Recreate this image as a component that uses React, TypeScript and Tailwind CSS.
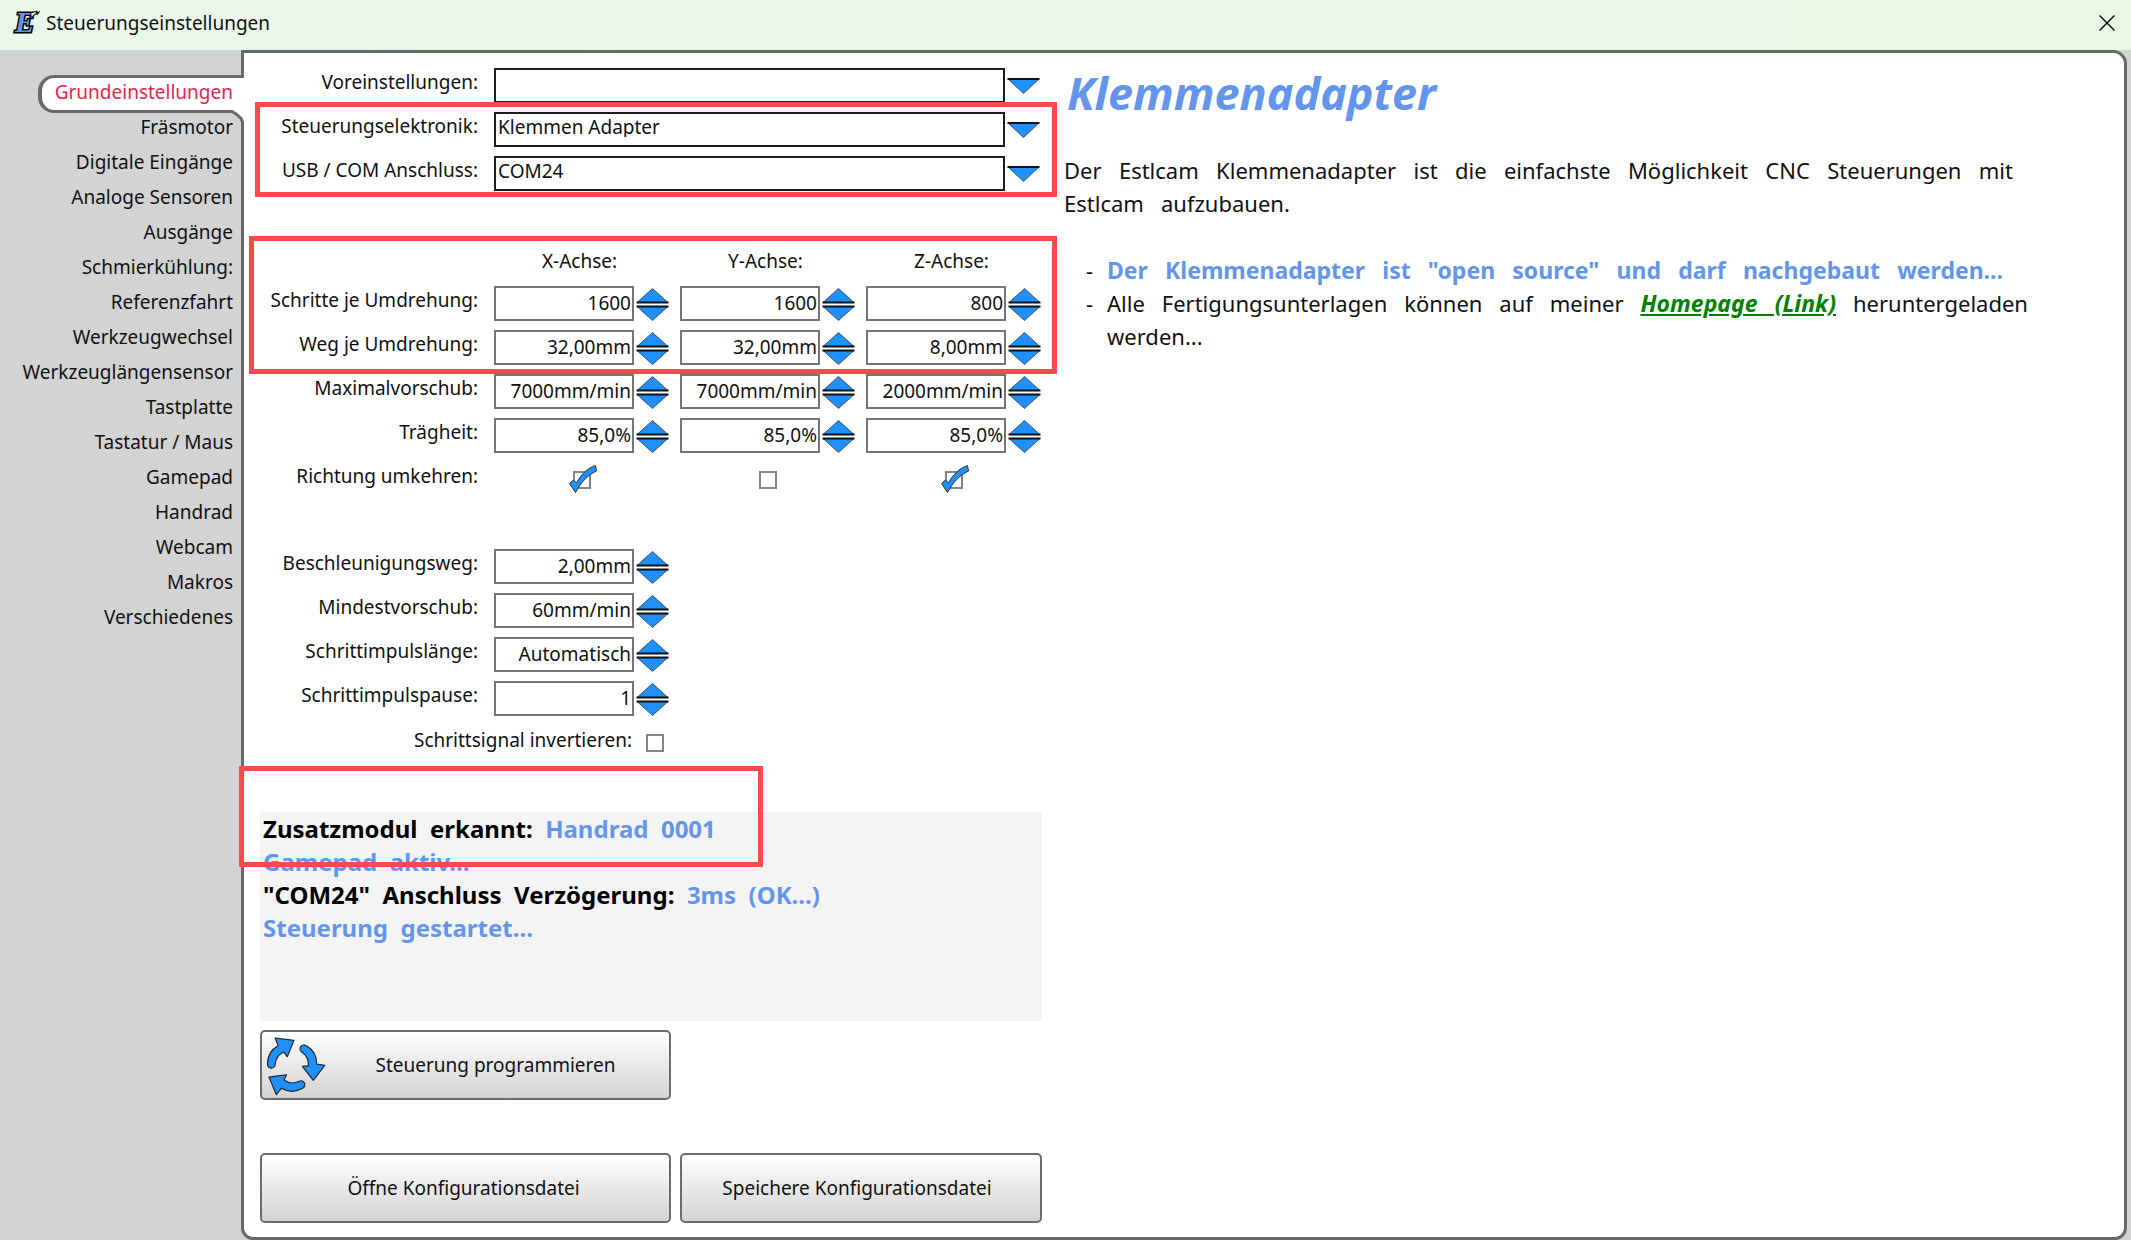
import { useId, useState } from "react";

const NAV = [
  "Grundeinstellungen",
  "Fräsmotor",
  "Digitale Eingänge",
  "Analoge Sensoren",
  "Ausgänge",
  "Schmierkühlung:",
  "Referenzfahrt",
  "Werkzeugwechsel",
  "Werkzeuglängensensor",
  "Tastplatte",
  "Tastatur / Maus",
  "Gamepad",
  "Handrad",
  "Webcam",
  "Makros",
  "Verschiedenes",
];

const AXES = ["X-Achse:", "Y-Achse:", "Z-Achse:"];

const AXIS_ROWS: { label: string; values: string[] }[] = [
  { label: "Schritte je Umdrehung:", values: ["1600", "1600", "800"] },
  { label: "Weg je Umdrehung:", values: ["32,00mm", "32,00mm", "8,00mm"] },
  { label: "Maximalvorschub:", values: ["7000mm/min", "7000mm/min", "2000mm/min"] },
  { label: "Trägheit:", values: ["85,0%", "85,0%", "85,0%"] },
];

const SINGLE_ROWS = [
  { label: "Beschleunigungsweg:", value: "2,00mm" },
  { label: "Mindestvorschub:", value: "60mm/min" },
  { label: "Schrittimpulslänge:", value: "Automatisch" },
  { label: "Schrittimpulspause:", value: "1" },
];

const ROW = "grid grid-cols-[218px_minmax(0,1fr)] gap-x-4 h-[35px]";
const LABEL = "text-right leading-7 whitespace-nowrap";
const AXIS_GRID = "grid grid-cols-[175px_175px_175px] gap-x-[11px]";

function AppIcon() {
  return (
    <svg width="30" height="28" viewBox="0 0 30 28" className="overflow-visible" aria-hidden="true">
      <text
        x="3"
        y="25"
        fontFamily="'Liberation Serif', serif"
        fontSize="29"
        fontWeight="bold"
        fontStyle="italic"
        fill="#6495ed"
        stroke="#000"
        strokeWidth="3"
        paintOrder="stroke"
      >
        E
      </text>
      <path d="M19 6l4-1.500 2-.5-1 3-2 1-1.500 1.500-2-1z" fill="#dcdcdc" stroke="#111" strokeWidth="1" />
      <path d="M23.500 5.500L28.500 4L25 8.500Z" fill="#111" />
    </svg>
  );
}

function RecycleIcon() {
  const arrow =
    "M1.500 28C1.500 19 6 12.500 12.500 9L9.500 1L29 3.500L22 20.500L18.500 15.500C13 18 10 22 9.500 28.500A4 4 0 0 1 1.500 28Z";
  return (
    <svg width="56" height="56" viewBox="0 0 58 58" className="overflow-visible" aria-hidden="true">
      <g fill="#1e90ff" stroke="#222" strokeWidth="1.200" strokeLinejoin="round">
        <path d={arrow} />
        <path d={arrow} transform="rotate(120 27 30)" />
        <path d={arrow} transform="rotate(240 27 30)" />
      </g>
    </svg>
  );
}

function SelectRow({ label, value }: { label: string; value: string }) {
  const id = useId();
  return (
    <div className={ROW}>
      <label htmlFor={id} className={LABEL}>
        {label}
      </label>
      <div className="flex gap-[2px]">
        <select
          id={id}
          defaultValue={value}
          className="h-[35px] w-[511px] appearance-none rounded-none border-2 border-[#1c1c1c] bg-white pb-1 pl-[2px] leading-none outline-none"
        >
          <option>{value}</option>
        </select>
        <svg width="33" height="35" viewBox="0 0 33 35" aria-hidden="true">
          <path d="M1 11H32L16.500 25.500Z" fill="#1e90ff" stroke="#333" strokeWidth=".8" />
          <path d="M.5 11H32.500" stroke="#111" strokeWidth="2" />
        </svg>
      </div>
    </div>
  );
}

function Spin({ id, value, label }: { id?: string; value: string; label?: string }) {
  return (
    <div className="flex gap-[2px]">
      <input
        id={id}
        aria-label={label}
        defaultValue={value}
        className="h-[35px] w-[140px] border-2 border-[#757575] bg-white pr-px pb-[2px] text-right outline-none"
      />
      <div className="flex flex-col pt-[2px]">
        <button type="button" aria-label="Erhöhen" className="h-[16px]">
          <svg width="33" height="16" viewBox="0 0 33 16">
            <path d="M1 14.500L16.500 .5L32 14.500Z" fill="#1e90ff" stroke="#333" strokeWidth=".8" />
            <path d="M.5 14.500H32.500" stroke="#111" strokeWidth="2" />
          </svg>
        </button>
        <button type="button" aria-label="Verringern" className="h-[17px]">
          <svg width="33" height="17" viewBox="0 0 33 17">
            <path d="M1 2.500H32L16.500 16.500Z" fill="#1e90ff" stroke="#333" strokeWidth=".8" />
            <path d="M.5 2.500H32.500" stroke="#111" strokeWidth="2" />
          </svg>
        </button>
      </div>
    </div>
  );
}

function Check({ id, label, checked }: { id?: string; label?: string; checked?: boolean }) {
  return (
    <span className="relative block size-[18px]">
      <input
        id={id}
        aria-label={label}
        type="checkbox"
        defaultChecked={checked}
        className="peer block size-[18px] appearance-none border-2 border-[#858585] bg-white"
      />
      <svg
        width="30"
        height="30"
        viewBox="0 0 30 30"
        className="pointer-events-none absolute -top-[7px] -left-[5px] hidden peer-checked:block"
        aria-hidden="true"
      >
        <path
          d="M1.500 19.500L5.500 16L8.500 19C13 10.500 19 4.500 27.500 1.500L28.500 7C20 11 13 18 7.500 28.500Z"
          fill="#1e90ff"
          stroke="#333"
          strokeWidth="1"
        />
      </svg>
    </span>
  );
}

function SingleRow({ label, value }: { label: string; value: string }) {
  const id = useId();
  return (
    <div className={ROW}>
      <label htmlFor={id} className={LABEL}>
        {label}
      </label>
      <Spin id={id} value={value} />
    </div>
  );
}

const BUTTON =
  "flex h-[70px] items-center rounded-[5px] border-2 border-[#6c6c6c] bg-linear-to-b from-white to-[#d3d3d3]";

export default function App() {
  const [active, setActive] = useState(0);
  return (
    <div className="flex min-h-screen flex-col bg-[#d3d3d3] font-['Noto_Sans','Open_Sans',sans-serif] text-[19px] text-[#111]">
      <header className="flex h-[50px] items-center bg-linear-to-r from-[#eaf8eb] to-[#ebf7e5] pr-4 pl-[12px]">
        <div className="pb-2">
          <AppIcon />
        </div>
        <h1 className="ml-1 pb-1">Steuerungseinstellungen</h1>
        <button type="button" aria-label="Schließen" className="ml-auto pb-1">
          <svg width="16" height="16" viewBox="0 0 16 16">
            <path d="M.5 .5L15.500 15.500M15.500 .5L.5 15.500" stroke="#111" strokeWidth="1.500" />
          </svg>
        </button>
      </header>

      <div className="flex flex-1">
        <nav className="flex w-[241px] shrink-0 flex-col pt-[25px]">
          {NAV.map((item, i) =>
            i === active ? (
              <button
                key={item}
                type="button"
                aria-current="page"
                className="relative z-10 -mr-[3px] -mb-[3px] ml-[38px] h-[38px] rounded-l-2xl border-y-[3px] border-l-[4px] border-[#696969] bg-white pr-[11px] pb-1 text-right leading-7 text-[#e8234f]"
              >
                {item}
                <svg
                  width="16"
                  height="18"
                  viewBox="0 0 16 18"
                  className="absolute right-0 -bottom-[18px]"
                  aria-hidden="true"
                >
                  <path d="M3 0H16V18H14.500V12L13 8.500L8 4Z" fill="#fff" />
                  <path d="M0 1.500H4L8 4L13 8.500L14.500 12V18" fill="none" stroke="#696969" strokeWidth="3" />
                </svg>
              </button>
            ) : (
              <button
                key={item}
                type="button"
                onClick={() => setActive(i)}
                className="h-[35px] pr-2 text-right whitespace-nowrap"
              >
                {item}
              </button>
            ),
          )}
        </nav>

        <main className="relative mr-1 flex flex-1 rounded-tr-[14px] rounded-b-[12px] border-[3px] border-[#696969] bg-white pb-[14px] pl-4">
          <form className="w-[782px] shrink-0 pt-[15px]">
            <div className="space-y-[9px]">
              <SelectRow label="Voreinstellungen:" value="" />
              <SelectRow label="Steuerungselektronik:" value="Klemmen Adapter" />
              <SelectRow label="USB / COM Anschluss:" value="COM24" />
            </div>

            <div className="mt-[51px] space-y-[9px]">
              <div className={ROW}>
                <span />
                <div className={AXIS_GRID}>
                  {AXES.map((a) => (
                    <span key={a} className="pr-1 text-center leading-[38px]">
                      {a}
                    </span>
                  ))}
                </div>
              </div>
              {AXIS_ROWS.map((row) => (
                <div key={row.label} className={ROW}>
                  <span className={LABEL}>{row.label}</span>
                  <div className={AXIS_GRID}>
                    {row.values.map((v, i) => (
                      <Spin key={AXES[i]} value={v} label={`${row.label} ${AXES[i]}`} />
                    ))}
                  </div>
                </div>
              ))}
              <div className={ROW}>
                <span className={LABEL}>Richtung umkehren:</span>
                <div className={`${AXIS_GRID} place-items-center`}>
                  {[true, false, true].map((c, i) => (
                    <Check key={AXES[i]} checked={c} label={`Richtung umkehren ${AXES[i]}`} />
                  ))}
                </div>
              </div>
            </div>

            <div className="mt-[52px] space-y-[9px]">
              {SINGLE_ROWS.map((r) => (
                <SingleRow key={r.label} {...r} />
              ))}
              <div className="flex h-[35px] w-[404px] items-center justify-end gap-[14px]">
                <label htmlFor="invert" className="pb-1">
                  Schrittsignal invertieren:
                </label>
                <Check id="invert" />
              </div>
            </div>

            <div className="mt-[52px] h-[209px] bg-[#f4f4f4] pl-[3px] text-[24px] leading-[33px] font-bold whitespace-pre text-[#6495ed]">
              <p>
                <span className="text-black">Zusatzmodul  erkannt:  </span>
                Handrad  0001
              </p>
              <p>Gamepad  aktiv...</p>
              <p>
                <span className="text-black">"COM24"  Anschluss  Verzögerung:  </span>
                3ms  (OK...)
              </p>
              <p>Steuerung  gestartet...</p>
            </div>

            <button type="button" className={`${BUTTON} mt-[9px] w-[411px] pl-1`}>
              <RecycleIcon />
              <span className="flex-1">Steuerung programmieren</span>
            </button>
            <div className="mt-[53px] flex gap-[9px]">
              <button type="button" className={`${BUTTON} w-[411px] justify-center pr-1`}>
                Öffne Konfigurationsdatei
              </button>
              <button type="button" className={`${BUTTON} flex-1 justify-center pr-2`}>
                Speichere Konfigurationsdatei
              </button>
            </div>
          </form>

          <article className="ml-[22px] flex-1 pt-[10px] pr-24 text-[22px] leading-[33px]">
            <h2 className="pl-[3px] text-[45px] leading-[60px] font-bold text-[#6495ed] italic">Klemmenadapter</h2>
            <p className="mt-[31px] max-w-[949px]">
              <span className="block [text-align-last:justify]">
                Der Estlcam Klemmenadapter ist die einfachste Möglichkeit CNC Steuerungen mit
              </span>
              <span className="block whitespace-pre">Estlcam   aufzubauen.</span>
            </p>
            <ul className="mt-[34px] ml-[22px]">
              <li className="flex">
                <span className="w-[21px] shrink-0">-</span>
                <span className="block max-w-[896px] flex-1 text-[23px] font-bold text-[#6495ed] [text-align-last:justify]">
                  Der Klemmenadapter ist "open source" und darf nachgebaut werden...
                </span>
              </li>
              <li className="flex">
                <span className="w-[21px] shrink-0">-</span>
                <span className="max-w-[924px] flex-1">
                  <span className="block [text-align-last:justify]">
                    Alle Fertigungsunterlagen können auf meiner{" "}
                    <a href="#homepage" className="text-[23px] font-bold text-[#008000] italic underline">
                      Homepage (Link)
                    </a>{" "}
                    heruntergeladen
                  </span>
                  <span className="block">werden...</span>
                </span>
              </li>
            </ul>
          </article>

          <div className="pointer-events-none absolute top-[49px] left-[11px] h-[95px] w-[802px] border-[5px] border-[#ff4a4d]" />
          <div className="pointer-events-none absolute top-[183px] left-[5px] h-[138px] w-[808px] border-[5px] border-[#ff4a4d]" />
          <div className="pointer-events-none absolute top-[713px] -left-[5px] h-[101px] w-[524px] border-[5px] border-[#ff4a4d]" />
        </main>
      </div>
    </div>
  );
}
